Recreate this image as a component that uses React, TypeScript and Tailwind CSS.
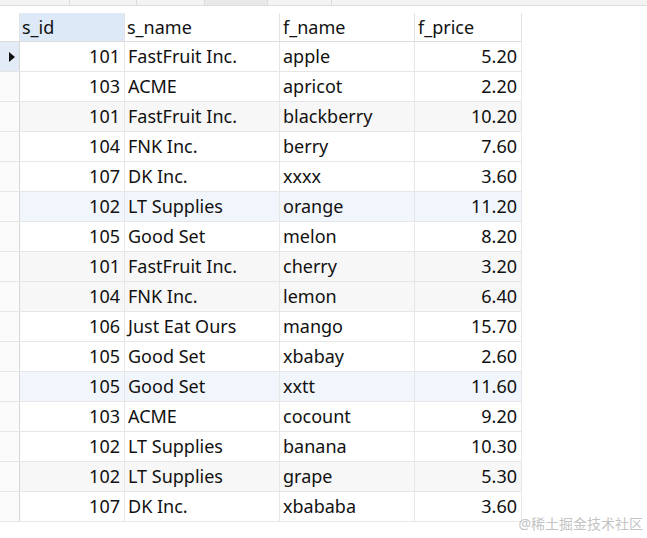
import React from "react";

type Row = { id: number; name: string; fruit: string; price: string; tone?: "grey" | "blue" };

const rows: Row[] = [
  { id: 101, name: "FastFruit Inc.", fruit: "apple", price: "5.20" },
  { id: 103, name: "ACME", fruit: "apricot", price: "2.20" },
  { id: 101, name: "FastFruit Inc.", fruit: "blackberry", price: "10.20", tone: "grey" },
  { id: 104, name: "FNK Inc.", fruit: "berry", price: "7.60" },
  { id: 107, name: "DK Inc.", fruit: "xxxx", price: "3.60" },
  { id: 102, name: "LT Supplies", fruit: "orange", price: "11.20", tone: "blue" },
  { id: 105, name: "Good Set", fruit: "melon", price: "8.20" },
  { id: 101, name: "FastFruit Inc.", fruit: "cherry", price: "3.20", tone: "grey" },
  { id: 104, name: "FNK Inc.", fruit: "lemon", price: "6.40", tone: "grey" },
  { id: 106, name: "Just Eat Ours", fruit: "mango", price: "15.70" },
  { id: 105, name: "Good Set", fruit: "xbabay", price: "2.60" },
  { id: 105, name: "Good Set", fruit: "xxtt", price: "11.60", tone: "blue" },
  { id: 103, name: "ACME", fruit: "cocount", price: "9.20" },
  { id: 102, name: "LT Supplies", fruit: "banana", price: "10.30" },
  { id: 102, name: "LT Supplies", fruit: "grape", price: "5.30", tone: "grey" },
  { id: 107, name: "DK Inc.", fruit: "xbababa", price: "3.60" },
];

const toneBg = (tone?: Row["tone"]) =>
  tone === "grey" ? "bg-[#f7f7f7]" : tone === "blue" ? "bg-[#f1f6fc]" : "bg-white";

export default function App() {
  return (
    <div
      className="relative h-[538px] w-[647px] overflow-hidden bg-white text-[18px] text-[#111]"
      style={{ fontFamily: '"Noto Sans", "Open Sans", sans-serif' }}
    >
      {/* tab strip cut off at the top */}
      <div className="flex h-[6px] border-b border-[#dedede] bg-[#f3f3f3]">
        <div className="w-[70px] border-r border-[#dcdcdc]" />
        <div className="w-[67px] border-r border-[#dcdcdc]" />
        <div className="w-[68px] border-r border-[#dcdcdc]" />
        <div className="w-[63px] border-r border-[#dcdcdc] bg-[#e9e9e9]" />
        <div className="w-[64px] border-r border-[#dcdcdc]" />
        <div className="flex-1" />
      </div>

      <div className="mt-[7px] w-[522px]">
        {/* header */}
        <div className="flex h-[29px] border-b border-[#dcdcdc] leading-[28px]">
          <div className="w-[20px] border-r border-[#e3e3e3]" />
          <div className="w-[105px] border-r border-[#e3e3e3] bg-[#dde9f6] pl-[2px]">s_id</div>
          <div className="w-[155px] border-r border-[#e3e3e3] pl-[2px]">s_name</div>
          <div className="w-[135px] border-r border-[#e3e3e3] pl-[3px]">f_name</div>
          <div className="w-[107px] border-r border-[#e3e3e3] pl-[3px]">f_price</div>
        </div>

        {rows.map((r, i) => (
          <div key={i} className={`flex h-[30px] border-b border-[#e6e6e6] leading-[29px] ${toneBg(r.tone)}`}>
            <div
              className={`flex w-[20px] items-center justify-center border-r border-[#d6d6d6] ${
                i === 0 ? "bg-[#e3ecf6]" : "bg-[#fbfbfb]"
              }`}
            >
              {i === 0 && (
                <svg width="8" height="12" viewBox="0 0 8 12" className="ml-[4px]">
                  <path d="M1 1 L7 6 L1 11 Z" fill="#111" />
                </svg>
              )}
            </div>
            <div className="w-[105px] border-r border-[#e6e6e6] pr-[4px] text-right">{r.id}</div>
            <div className="w-[155px] border-r border-[#e6e6e6] pl-[3px] whitespace-nowrap">{r.name}</div>
            <div className="w-[135px] border-r border-[#e6e6e6] pl-[3px]">{r.fruit}</div>
            <div className="w-[107px] border-r border-[#e6e6e6] pr-[4px] text-right">{r.price}</div>
          </div>
        ))}
      </div>

      <div
        className="absolute bottom-[5px] right-[4px] text-[14px] leading-[18px] text-[#c4c4c4]"
        style={{ fontFamily: '"Noto Sans", "Noto Sans CJK SC", sans-serif' }}
      >
        @稀土掘金技术社区
      </div>
    </div>
  );
}
